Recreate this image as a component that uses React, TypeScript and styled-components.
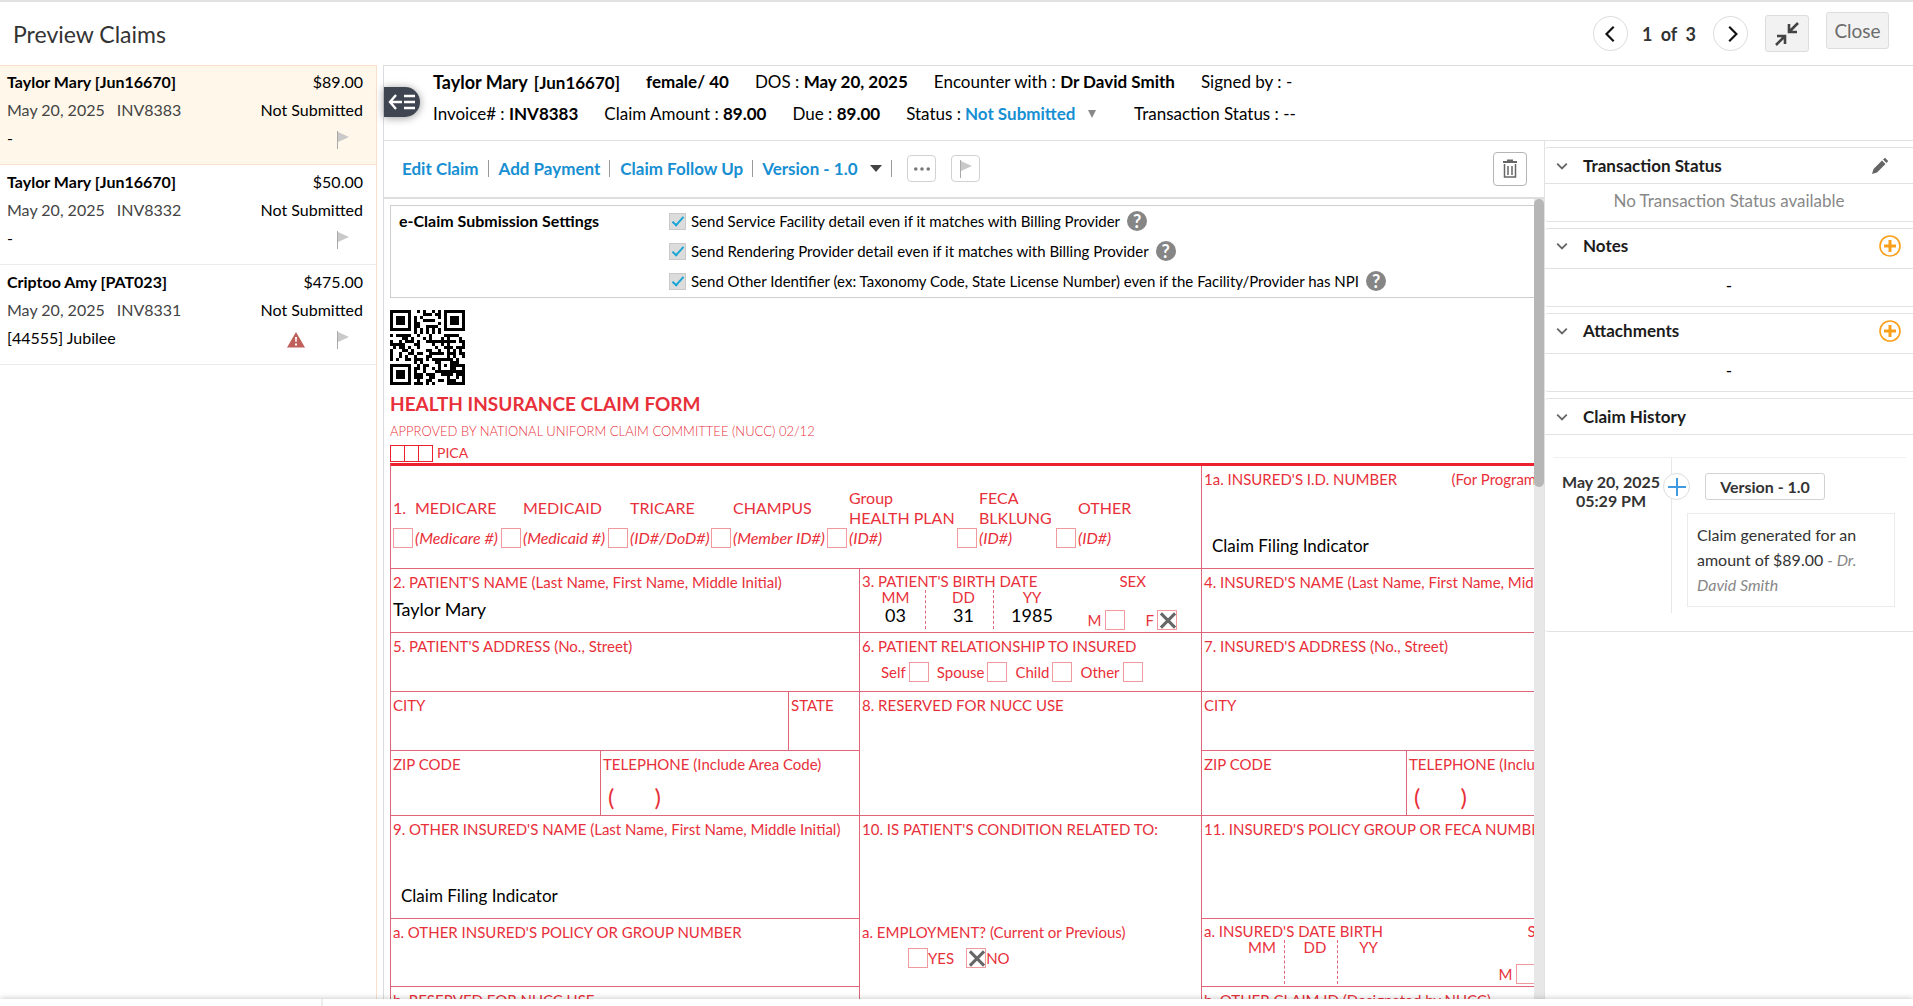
import React, { useMemo } from "react";
import styled, { createGlobalStyle, css } from "styled-components";

const RED = "#e8303a";
const RULE = "#df6678";
const BLUE = "#178fd2";
const LINE = "#e2e2e4";

const GlobalStyle = createGlobalStyle`
  *, *::before, *::after { box-sizing: border-box; }
  html, body { margin: 0; padding: 0; }
  body, button, input, select {
    font-family: Lato, "Open Sans", sans-serif;
    font-size: 16px;
    line-height: 20px;
    color: #000;
  }
  body { background: #fff; }
  button { cursor: pointer; padding: 0; margin: 0; }
  h1, h2, h3, p { margin: 0; }
`;

/* ---------- QR code ---------- */

const QR_SIZE = 25;
const QR_LEVELS = {
  L: { bits: 1, data: 34 },
  M: { bits: 0, data: 28 },
  Q: { bits: 3, data: 22 },
} as const;
type QrLevel = keyof typeof QR_LEVELS;

const MASKS: ((x: number, y: number) => boolean)[] = [
  (x, y) => (x + y) % 2 === 0,
  (_x, y) => y % 2 === 0,
  (x) => x % 3 === 0,
  (x, y) => (x + y) % 3 === 0,
  (x, y) => (Math.floor(x / 3) + Math.floor(y / 2)) % 2 === 0,
  (x, y) => ((x * y) % 2) + ((x * y) % 3) === 0,
  (x, y) => (((x * y) % 2) + ((x * y) % 3)) % 2 === 0,
  (x, y) => (((x + y) % 2) + ((x * y) % 3)) % 2 === 0,
];

function gfMul(a: number, b: number): number {
  let z = 0;
  for (let i = 7; i >= 0; i--) {
    z = (z << 1) ^ ((z >>> 7) * 0x11d);
    z ^= ((b >>> i) & 1) * a;
  }
  return z;
}

function parity(data: number[], degree: number): number[] {
  const div = new Array<number>(degree).fill(0);
  div[degree - 1] = 1;
  let root = 1;
  for (let i = 0; i < degree; i++) {
    for (let j = 0; j < degree; j++) {
      div[j] = gfMul(div[j], root);
      if (j + 1 < degree) div[j] ^= div[j + 1];
    }
    root = gfMul(root, 2);
  }
  const rem = new Array<number>(degree).fill(0);
  data.forEach((b) => {
    const f = b ^ (rem.shift() as number);
    rem.push(0);
    div.forEach((c, i) => (rem[i] ^= gfMul(c, f)));
  });
  return rem;
}

function qrMatrix(text: string, level: QrLevel, mask: number): boolean[][] {
  const { bits: levelBits, data: capacity } = QR_LEVELS[level];
  const grid = Array.from({ length: QR_SIZE }, () => new Array<boolean>(QR_SIZE).fill(false));
  const fixed = Array.from({ length: QR_SIZE }, () => new Array<boolean>(QR_SIZE).fill(false));
  const put = (x: number, y: number, dark: boolean) => {
    if (x < 0 || y < 0 || x >= QR_SIZE || y >= QR_SIZE) return;
    grid[y][x] = dark;
    fixed[y][x] = true;
  };

  for (let i = 0; i < QR_SIZE; i++) {
    put(6, i, i % 2 === 0);
    put(i, 6, i % 2 === 0);
  }
  [[3, 3], [QR_SIZE - 4, 3], [3, QR_SIZE - 4]].forEach(([cx, cy]) => {
    for (let dy = -4; dy <= 4; dy++)
      for (let dx = -4; dx <= 4; dx++) {
        const d = Math.max(Math.abs(dx), Math.abs(dy));
        put(cx + dx, cy + dy, d !== 2 && d !== 4);
      }
  });
  for (let dy = -2; dy <= 2; dy++)
    for (let dx = -2; dx <= 2; dx++)
      put(18 + dx, 18 + dy, Math.max(Math.abs(dx), Math.abs(dy)) !== 1);

  const format = (levelBits << 3) | mask;
  let bch = format;
  for (let i = 0; i < 10; i++) bch = (bch << 1) ^ ((bch >>> 9) * 0x537);
  const info = ((format << 10) | bch) ^ 0x5412;
  const bit = (i: number) => ((info >>> i) & 1) !== 0;
  for (let i = 0; i <= 5; i++) put(8, i, bit(i));
  put(8, 7, bit(6));
  put(8, 8, bit(7));
  put(7, 8, bit(8));
  for (let i = 9; i < 15; i++) put(14 - i, 8, bit(i));
  for (let i = 0; i < 8; i++) put(QR_SIZE - 1 - i, 8, bit(i));
  for (let i = 8; i < 15; i++) put(8, QR_SIZE - 15 + i, bit(i));
  put(8, QR_SIZE - 8, true);

  let stream = "0100" + text.length.toString(2).padStart(8, "0");
  for (const ch of text) stream += ch.charCodeAt(0).toString(2).padStart(8, "0");
  stream += "0000";
  const data: number[] = [];
  for (let i = 0; i + 8 <= stream.length; i += 8) data.push(parseInt(stream.slice(i, i + 8), 2));
  for (let pad = 0xec; data.length < capacity; pad ^= 0xec ^ 0x11) data.push(pad);
  const words = data.concat(parity(data, 44 - capacity));

  let n = 0;
  for (let right = QR_SIZE - 1; right >= 1; right -= 2) {
    if (right === 6) right = 5;
    for (let v = 0; v < QR_SIZE; v++)
      for (let j = 0; j < 2; j++) {
        const x = right - j;
        const y = ((right + 1) & 2) === 0 ? QR_SIZE - 1 - v : v;
        if (fixed[y][x]) continue;
        const dark = n < words.length * 8 && ((words[n >>> 3] >>> (7 - (n & 7))) & 1) === 1;
        grid[y][x] = dark !== MASKS[mask](x, y);
        n++;
      }
  }
  return grid;
}

const QrSvg = styled.svg`
  display: block;
  width: 75px;
  height: 75px;
`;

function QrCode({ text, level, mask }: { text: string; level: QrLevel; mask: number }) {
  const d = useMemo(
    () =>
      qrMatrix(text, level, mask)
        .flatMap((row, y) => row.map((on, x) => (on ? `M${x} ${y}h1v1h-1z` : "")))
        .join(""),
    [text, level, mask]
  );
  return (
    <QrSvg viewBox="0 0 25 25" shapeRendering="crispEdges" role="img" aria-label="QR code">
      <path d={d} />
    </QrSvg>
  );
}

/* ---------- icons ---------- */

const FlagIcon = () => (
  <svg width="14" height="18" viewBox="0 0 14 18" aria-hidden="true">
    <path d="M1.5 0v18" stroke="#a9a9a9" />
    <path d="M2 1l11 5-11 5z" fill="#c9c9c9" />
  </svg>
);
const WarningIcon = () => (
  <svg width="18" height="16" viewBox="0 0 18 16" aria-label="Warning" role="img">
    <path d="M9 0l9 15.500H0z" fill="#c0605a" />
    <path d="M8 5h2l-.4 5H8.400zM8 11.500h2v2H8z" fill="#fff" />
  </svg>
);
const Chevron = ({ d, size, w, color }: { d: string; size: number; w: number; color: string }) => (
  <svg width={size} height={size} viewBox="0 0 20 20" fill="none" stroke={color} strokeWidth={w} aria-hidden="true">
    <path d={d} />
  </svg>
);
const CompressIcon = () => (
  <svg width="26" height="26" viewBox="0 0 26 26" fill="none" stroke="#444" strokeWidth="2.600" aria-hidden="true">
    <path d="M24 2l-8.500 8.500M15 3v8h8M2 24l8.500-8.500M3 15h8v8" />
  </svg>
);
const TrashIcon = () => (
  <svg width="16" height="20" viewBox="0 0 16 20" fill="none" stroke="#666" aria-hidden="true">
    <path d="M1 3h14M5 1.500h6" strokeWidth="2" />
    <path d="M2.500 5v13h11V5M6 7v9M10 7v9" strokeWidth="1.500" />
  </svg>
);
const PencilIcon = () => (
  <svg width="18" height="18" viewBox="0 0 18 18" fill="#666" aria-hidden="true">
    <path d="M1 17l1.500-5 8.500-8.500 3.500 3.500L6 15.500zM12 2.500L14 .8l3.200 3.200-1.700 2z" />
  </svg>
);
const PlusCircle = () => (
  <svg width="22" height="22" viewBox="0 0 22 22" fill="none" stroke="#f9a01b" aria-hidden="true">
    <circle cx="11" cy="11" r="10" strokeWidth="1.600" />
    <path d="M11 5v12M5 11h12" strokeWidth="3" />
  </svg>
);
const CollapseIcon = () => (
  <svg width="28" height="18" viewBox="0 0 28 18" fill="none" stroke="#fff" strokeWidth="2.400" aria-hidden="true">
    <path d="M8 2L2 9l6 7M2 9h12M16 3h11M16 9h11M16 15h11" />
  </svg>
);
const Caret = ({ color, w }: { color: string; w: number }) => (
  <svg width={w} height={w === 12 ? 7 : 8} viewBox="0 0 12 8" preserveAspectRatio="none" aria-hidden="true">
    <path d="M0 0h12L6 8z" fill={color} />
  </svg>
);

/* ---------- page frame ---------- */

const Page = styled.div`
  height: 100vh;
  min-width: 1300px;
  display: flex;
  flex-direction: column;
  overflow: hidden;
  border-top: 2px solid #e2e2e2;
`;
const Header = styled.header`
  flex: none;
  height: 63px;
  display: flex;
  align-items: center;
  justify-content: space-between;
  padding: 0 24px 0 13px;
`;
const Title = styled.h1`
  font-size: 23px;
  line-height: 26px;
  font-weight: 400;
  color: #333;
`;
const HeaderTools = styled.div`
  display: flex;
  align-items: center;
  gap: 17px;
`;
const RoundButton = styled.button`
  width: 35px;
  height: 35px;
  display: grid;
  place-items: center;
  border: 1px solid #dcdcdc;
  border-radius: 50%;
  background: #fff;
`;
const PageCount = styled.span`
  width: 54px;
  margin-left: -3px;
  font-size: 18px;
  font-weight: 700;
  color: #333;
  display: flex;
  justify-content: space-between;
`;
const GreyButton = styled.button<{ $wide?: boolean; $raised?: boolean }>`
  width: ${(p) => (p.$wide ? 63 : 44)}px;
  height: 37px;
  display: grid;
  place-items: center;
  border: 1px solid #ddd;
  border-radius: 3px;
  background: #f2f2f2;
  color: #6b6b6b;
  font-size: 19px;
  margin-bottom: ${(p) => (p.$raised ? 6 : 0)}px;
`;
const Body = styled.div`
  flex: 1;
  min-height: 0;
  display: flex;
`;
const Footer = styled.footer`
  flex: none;
  height: 7px;
  position: relative;
  background: #fff;
  box-shadow: 0 0 6px rgba(0, 0, 0, 0.25);
  display: flex;
  &::before {
    content: "";
    width: 323px;
    border-right: 2px solid #ececec;
  }
`;

/* ---------- claim list ---------- */

const Sidebar = styled.nav`
  flex: none;
  width: 377px;
  border-right: 1px solid #fde0cb;
`;
const ClaimItem = styled.a<{ $active?: boolean }>`
  height: 100px;
  display: flex;
  flex-direction: column;
  gap: 8px;
  padding: ${(p) => (p.$active ? 6 : 7)}px 13px 0 7px;
  color: #000;
  text-decoration: none;
  border-bottom: 1px solid #ebebeb;
  ${(p) =>
    p.$active &&
    css`
      background: #fff7ea;
      border-top: 1px solid #fde0cb;
      border-bottom-color: #fde0cb;
    `}
`;
const ItemRow = styled.div`
  display: flex;
  justify-content: space-between;
  align-items: center;
  height: 20px;
`;
const Muted = styled.span`
  display: flex;
  gap: 12px;
  color: #444;
`;
const ItemIcons = styled.span`
  display: flex;
  align-items: center;
  gap: 31px;
  margin-right: 13px;
  padding-top: 4px;
`;

const claims = [
  { name: "Taylor Mary [Jun16670]", amount: "$89.00", inv: "INV8383", payer: "-", warn: false },
  { name: "Taylor Mary [Jun16670]", amount: "$50.00", inv: "INV8332", payer: "-", warn: false },
  { name: "Criptoo Amy [PAT023]", amount: "$475.00", inv: "INV8331", payer: "[44555] Jubilee", warn: true },
];

/* ---------- claim header ---------- */

const Main = styled.main`
  flex: 1;
  min-width: 0;
  margin-left: 6px;
  border-left: 1px solid #dcdce0;
  border-top: 1px solid #dcdce0;
  display: flex;
  flex-direction: column;
`;
const ClaimHead = styled.section`
  flex: none;
  position: relative;
  height: 75px;
  padding: 6px 20px 0 49px;
  border-bottom: 1px solid ${LINE};
  display: flex;
  flex-direction: column;
  gap: 12px;
  font-size: 17px;
`;
const HeadRow = styled.div`
  display: flex;
  align-items: center;
  gap: 26px;
  height: 20px;
  white-space: nowrap;
`;
const PatientName = styled.h2`
  font-size: 18px;
  font-weight: 700;
  span { font-size: 17px; margin-left: 6px; }
`;
const StatusField = styled.label`
  display: flex;
  align-items: center;
  gap: 4px;
`;
const PlainSelect = styled.select<{ $gap: number }>`
  appearance: none;
  border: 0;
  padding: 0;
  background: transparent;
  color: ${BLUE};
  font-size: 17px;
  font-weight: 700;
  margin-right: ${(p) => p.$gap}px;
`;
const HeadNote = styled.span`
  margin-left: 12px;
`;
const Toggle = styled.button`
  position: absolute;
  left: 0;
  top: 21px;
  width: 36px;
  height: 30px;
  display: grid;
  place-items: center;
  border: 0;
  border-radius: 0 15px 15px 0;
  background: #3f4651;
  box-shadow: 0 1px 8px rgba(0, 0, 0, 0.4);
`;
const Columns = styled.div`
  flex: 1;
  min-height: 0;
  display: flex;
`;
const Work = styled.div`
  flex: 1;
  min-width: 0;
  display: flex;
  flex-direction: column;
`;
const Toolbar = styled.div`
  flex: none;
  height: 58px;
  display: flex;
  align-items: center;
  justify-content: space-between;
  padding: 0 17px 1px 18px;
  border-bottom: 2px solid #dedede;
  font-size: 17px;
`;
const ToolGroup = styled.div`
  display: flex;
  align-items: center;
`;
const ToolLink = styled.a`
  color: ${BLUE};
  font-weight: 700;
  text-decoration: none;
  padding: 0 9px 0 10px;
  border-right: 1px solid #999;
  line-height: 17px;
  &:first-child { padding-left: 0; }
`;
const VersionField = styled.label`
  display: flex;
  align-items: center;
  padding: 0 9px;
  border-right: 1px solid #999;
  height: 17px;
`;
const BoxButton = styled.button<{ $strong?: boolean }>`
  width: ${(p) => (p.$strong ? 34 : 29)}px;
  height: ${(p) => (p.$strong ? 34 : 27)}px;
  margin-left: 15px;
  display: grid;
  place-items: center;
  border: 1px solid ${(p) => (p.$strong ? "#b5b5b5" : "#d2d2d2")};
  border-radius: 4px;
  background: #fff;
`;

/* ---------- scroll area ---------- */

const ScrollWrap = styled.div`
  flex: 1;
  min-height: 0;
  display: flex;
`;
const Scroll = styled.div`
  flex: 1;
  min-width: 0;
  overflow: hidden;
  padding: 6px 0 0 6px;
`;
const Track = styled.div`
  flex: none;
  width: 10px;
  background: #e7e7e7;
`;
const Thumb = styled.div`
  height: 36%;
  border-radius: 5px;
  background: #b6b6b6;
`;
const Sheet = styled.div`
  width: 1260px;
`;
const Settings = styled.section`
  height: 93px;
  border: 1px solid #cfcfcf;
  display: grid;
  grid-template-columns: 278px 1fr;
  padding-top: 5px;
`;
const SettingsTitle = styled.h3`
  font-size: 16px;
  font-weight: 700;
  padding-left: 8px;
`;
const SettingsList = styled.div`
  display: flex;
  flex-direction: column;
  gap: 10px;
`;
const SettingRow = styled.div`
  display: flex;
  align-items: center;
  height: 20px;
  font-size: 15px;
  label { margin: 0 7px 0 5px; }
`;
const Tick = styled.input`
  appearance: none;
  flex: none;
  width: 17px;
  height: 17px;
  margin: 0;
  border: 1px solid #c9c9c9;
  background: #dcdcdc;
  display: grid;
  place-items: center;
  &:checked::before {
    content: "";
    width: 6px;
    height: 12px;
    margin-bottom: 4px;
    border: solid #19a5d6;
    border-width: 0 2px 2px 0;
    transform: rotate(42deg);
  }
`;
const Help = styled.button`
  width: 20px;
  height: 20px;
  border: 0;
  border-radius: 50%;
  background: #868686;
  color: #fff;
  font-size: 18px;
  font-weight: 700;
`;

/* ---------- claim form ---------- */

const FormHead = styled.div`
  padding-top: 12px;
  color: ${RED};
`;
const FormTitle = styled.h2`
  font-size: 19px;
  line-height: 24px;
  font-weight: 700;
  margin-top: 7px;
`;
const Approved = styled.p`
  font-weight: 300;
  font-size: 13px;
  margin-top: 5px;
`;
const Pica = styled.div`
  display: flex;
  align-items: center;
  height: 22px;
  padding-top: 2px;
  font-size: 14px;
  i {
    width: 15px;
    height: 17px;
    border: 1px solid #eb212e;
    & + i { margin-left: -1px; }
    &:nth-child(3) { margin-right: 4px; }
  }
`;
const Form = styled.div`
  border-top: 3px solid #eb212e;
  border-left: 1px solid ${RULE};
  color: ${RED};
  font-size: 15px;
  display: grid;
  grid-template-columns: 468px 342px 1fr;
  grid-template-rows: 103px 64px 59px 59px 65px 103px 68px 60px;
  white-space: nowrap;
`;
const Cell = styled.div<{ $rows?: number; $cols?: number; $left?: boolean; $open?: boolean }>`
  grid-row: span ${(p) => p.$rows ?? 1};
  grid-column: span ${(p) => p.$cols ?? 1};
  border-bottom: ${(p) => (p.$open ? "0" : `1px solid ${RULE}`)};
  border-left: ${(p) => (p.$left ? `1px solid ${RULE}` : "0")};
  padding: 3px 0 0 2px;
  min-width: 0;
`;
const Split = styled.div<{ $first: number; $left?: boolean }>`
  display: grid;
  grid-template-columns: ${(p) => p.$first}px 1fr;
  border-left: ${(p) => (p.$left ? `1px solid ${RULE}` : "0")};
`;
const Value = styled.div<{ $indent?: boolean; $gap: number }>`
  color: #000;
  font-size: ${(p) => (p.$indent ? 17 : 18)}px;
  margin-top: ${(p) => p.$gap}px;
  padding-left: ${(p) => (p.$indent ? 8 : 0)}px;
`;
const Parens = styled.div`
  display: flex;
  gap: 40px;
  padding: 11px 0 0 5px;
  font-size: 24px;
  line-height: 24px;
`;
const Spread = styled.div<{ $right: number; $tight?: boolean }>`
  display: flex;
  justify-content: space-between;
  padding-right: ${(p) => p.$right}px;
  line-height: ${(p) => (p.$tight ? 18 : 20)}px;
`;
const Plans = styled.div`
  display: grid;
  grid-template-columns: 108px 107px 103px 116px 130px 99px 1fr;
  padding-top: 19px;
  font-size: 16px;
`;
const Plan = styled.div`
  display: grid;
  grid-template-columns: 20px 1fr;
  column-gap: 2px;
  align-items: center;
`;
const PlanName = styled.span`
  height: 40px;
  display: flex;
  align-items: center;
  white-space: pre-line;
`;
const Cross = styled.input`
  appearance: none;
  flex: none;
  width: 20px;
  height: 20px;
  margin: 0;
  border: 1px solid #f0999f;
  background: #fff;
  display: grid;
  place-items: center;
  &:checked::before,
  &:checked::after {
    content: "";
    grid-area: 1 / 1;
    width: 20px;
    height: 3px;
    background: #666;
    transform: rotate(45deg);
  }
  &:checked::after { transform: rotate(-45deg); }
`;
const DateSex = styled.div`
  display: flex;
  justify-content: space-between;
`;
const DateParts = styled.div<{ $cell: number; $start: number; $tall?: boolean }>`
  display: flex;
  padding-left: ${(p) => p.$start}px;
  line-height: 14px;
  text-align: center;
  div {
    width: ${(p) => p.$cell}px;
    height: ${(p) => (p.$tall ? 44 : 39)}px;
    padding-left: 8px;
    border-right: 1px dashed ${RULE};
  }
  div:first-child {
    width: ${(p) => p.$cell - 4}px;
    padding-left: 4px;
  }
  div:last-child { border-right: 0; }
  b {
    display: block;
    font-weight: 400;
    font-size: 18px;
    line-height: 22px;
    color: #000;
  }
`;
const Choices = styled.div<{ $gap: number; $start?: number; $end?: number; $top: number; $inner: number }>`
  display: flex;
  gap: ${(p) => p.$gap}px;
  padding: ${(p) => p.$top}px ${(p) => p.$end ?? 0}px 0 ${(p) => p.$start ?? 0}px;
  label {
    display: flex;
    align-items: center;
    gap: ${(p) => p.$inner}px;
  }
`;

const plans = [
  ["MEDICARE", "(Medicare #)"],
  ["MEDICAID", "(Medicaid #)"],
  ["TRICARE", "(ID#/DoD#)"],
  ["CHAMPUS", "(Member ID#)"],
  ["Group\nHEALTH PLAN", "(ID#)"],
  ["FECA\nBLKLUNG", "(ID#)"],
  ["OTHER", "(ID#)"],
];

/* ---------- right column ---------- */

const Aside = styled.aside`
  flex: none;
  width: 369px;
  border-left: 1px solid ${LINE};
  padding-top: 6px;
  display: flex;
  flex-direction: column;
  gap: 6px;
`;
const Panel = styled.section`
  border: 1px solid ${LINE};
  border-width: 1px 0;
  border-radius: 3px 0 0 3px;
`;
const PanelHead = styled.div<{ $short?: boolean }>`
  height: ${(p) => (p.$short ? 36 : 40)}px;
  display: flex;
  align-items: center;
  padding: 0 12px ${(p) => (p.$short ? 0 : 5)}px 11px;
  border-bottom: 1px solid ${LINE};
  h3 { flex: 1; font-size: 17px; font-weight: 700; color: #1c1c1c; }
`;
const IconButton = styled.button<{ $end?: number }>`
  display: grid;
  place-items: center;
  border: 0;
  background: none;
  margin-right: ${(p) => p.$end ?? 0}px;
`;
const FoldButton = styled(IconButton)`
  margin-right: 15px;
`;
const PanelBody = styled.div<{ $grey?: boolean }>`
  height: 37px;
  padding-bottom: 4px;
  display: grid;
  place-items: center;
  font-size: 17px;
  color: ${(p) => (p.$grey ? "#888" : "#000")};
`;
const History = styled.div`
  margin: 22px 7px 18px 8px;
  border-top: 1px solid #f0f0f0;
  display: grid;
  grid-template-columns: 119px 1fr;
`;
const When = styled.div`
  padding: 14px 2px 0 0;
  text-align: center;
  line-height: 19px;
  font-weight: 700;
  color: #333;
  border-right: 1px solid #e8e8ea;
`;
const Event = styled.div`
  position: relative;
  padding: 15px 11px 6px 15px;
`;
const Dot = styled.button`
  position: absolute;
  left: -9px;
  top: 15px;
  width: 27px;
  height: 27px;
  display: grid;
  place-items: center;
  border: 1px solid #dcdcdc;
  border-radius: 50%;
  background: #fff;
`;
const VersionButton = styled.button`
  display: block;
  width: 120px;
  height: 27px;
  margin-left: 18px;
  border: 1px solid #d2d2d6;
  border-radius: 3px;
  background: #fff;
  font-weight: 700;
  color: #333;
`;
const Note = styled.p`
  margin-top: 13px;
  padding: 8px 9px 9px;
  border: 1px solid #ebebed;
  line-height: 25px;
  color: #333;
  em { color: #888; }
`;

const Fold = () => (
  <FoldButton aria-label="Collapse section">
    <Chevron d="M2 6l8 8 8-8" size={12} w={3} color="#666" />
  </FoldButton>
);

const settings = [
  "Send Service Facility detail even if it matches with Billing Provider",
  "Send Rendering Provider detail even if it matches with Billing Provider",
  "Send Other Identifier (ex: Taxonomy Code, State License Number) even if the Facility/Provider has NPI",
];

function ClaimForm() {
  return (
    <Form>
      <Cell $cols={2}>
        <Plans>
          {plans.map(([name, hint], i) => (
            <Plan key={name}>
              <span>{i === 0 ? "1." : ""}</span>
              <PlanName>{name}</PlanName>
              <Cross type="checkbox" id={`plan${i}`} />
              <label htmlFor={`plan${i}`}>
                <em>{hint}</em>
              </label>
            </Plan>
          ))}
        </Plans>
      </Cell>
      <Cell $left>
        <Spread $right={48}>
          <span>1a. INSURED'S I.D. NUMBER</span>
          <span>(For Program in Item 1)</span>
        </Spread>
        <Value $indent $gap={47}>Claim Filing Indicator</Value>
      </Cell>

      <Cell>
        2. PATIENT'S NAME (Last Name, First Name, Middle Initial)
        <Value $gap={7}>Taylor Mary</Value>
      </Cell>
      <Cell $left>
        <Spread $right={55} $tight>
          <span>3. PATIENT'S BIRTH DATE</span>
          <span>SEX</span>
        </Spread>
        <DateSex>
          <DateParts $cell={68} $start={0}>
            <div>MM<b>03</b></div>
            <div>DD<b>31</b></div>
            <div>YY<b>1985</b></div>
          </DateParts>
          <Choices $gap={21} $end={24} $top={20} $inner={3}>
            <label>M<Cross type="checkbox" /></label>
            <label>F<Cross type="checkbox" defaultChecked /></label>
          </Choices>
        </DateSex>
      </Cell>
      <Cell $left>4. INSURED'S NAME (Last Name, First Name, Middle Initial)</Cell>

      <Cell>5. PATIENT'S ADDRESS (No., Street)</Cell>
      <Cell $left>
        6. PATIENT RELATIONSHIP TO INSURED
        <Choices $gap={8} $start={19} $top={6} $inner={3}>
          {["Self", "Spouse", "Child", "Other"].map((t) => (
            <label key={t}>{t}<Cross type="checkbox" /></label>
          ))}
        </Choices>
      </Cell>
      <Cell $left>7. INSURED'S ADDRESS (No., Street)</Cell>

      <Split $first={397}>
        <Cell>CITY</Cell>
        <Cell $left>STATE</Cell>
      </Split>
      <Cell $left $rows={2}>8. RESERVED FOR NUCC USE</Cell>
      <Split $first={380} $left>
        <Cell>CITY</Cell>
        <Cell $left>STATE</Cell>
      </Split>

      <Split $first={209}>
        <Cell>ZIP CODE</Cell>
        <Cell $left>
          TELEPHONE (Include Area Code)
          <Parens><span>(</span><span>)</span></Parens>
        </Cell>
      </Split>
      <Split $first={204} $left>
        <Cell>ZIP CODE</Cell>
        <Cell $left>
          TELEPHONE (Include Area Code)
          <Parens><span>(</span><span>)</span></Parens>
        </Cell>
      </Split>

      <Cell>
        9. OTHER INSURED'S NAME (Last Name, First Name, Middle Initial)
        <Value $indent $gap={47}>Claim Filing Indicator</Value>
      </Cell>
      <Cell $left $open>10. IS PATIENT'S CONDITION RELATED TO:</Cell>
      <Cell $left>11. INSURED'S POLICY GROUP OR FECA NUMBER</Cell>

      <Cell>a. OTHER INSURED'S POLICY OR GROUP NUMBER</Cell>
      <Cell $left $open>
        a. EMPLOYMENT? (Current or Previous)
        <Choices $gap={12} $start={46} $top={6} $inner={0}>
          <label><Cross type="checkbox" />YES</label>
          <label><Cross type="checkbox" defaultChecked />NO</label>
        </Choices>
      </Cell>
      <Cell $left>
        <Spread $right={96} $tight>
          <span>a. INSURED'S DATE BIRTH</span>
          <span>SEX</span>
        </Spread>
        <DateSex>
          <DateParts $cell={53} $start={32} $tall>
            <div>MM</div>
            <div>DD</div>
            <div>YY</div>
          </DateParts>
          <Choices $gap={22} $end={61} $top={24} $inner={3}>
            <label>M<Cross type="checkbox" /></label>
            <label>F<Cross type="checkbox" /></label>
          </Choices>
        </DateSex>
      </Cell>

      <Cell $open>b. RESERVED FOR NUCC USE</Cell>
      <Cell $left $open />
      <Cell $left $open>b. OTHER CLAIM ID (Designated by NUCC)</Cell>
    </Form>
  );
}

export default function App() {
  return (
    <Page>
      <GlobalStyle />
      <Header>
        <Title>Preview Claims</Title>
        <HeaderTools>
          <RoundButton aria-label="Previous claim">
            <Chevron d="M13 2l-8 8 8 8" size={18} w={2.4} color="#111" />
          </RoundButton>
          <PageCount><span>1</span><span>of</span><span>3</span></PageCount>
          <RoundButton aria-label="Next claim">
            <Chevron d="M8 2l8 8-8 8" size={18} w={2.4} color="#111" />
          </RoundButton>
          <GreyButton aria-label="Exit full screen"><CompressIcon /></GreyButton>
          <GreyButton $wide $raised>Close</GreyButton>
        </HeaderTools>
      </Header>

      <Body>
        <Sidebar>
          {claims.map((c, i) => (
            <ClaimItem key={c.inv} href="#" $active={i === 0}>
              <ItemRow><b>{c.name}</b><span>{c.amount}</span></ItemRow>
              <ItemRow>
                <Muted><span>May 20, 2025</span><span>{c.inv}</span></Muted>
                <span>Not Submitted</span>
              </ItemRow>
              <ItemRow>
                <span>{c.payer}</span>
                <ItemIcons>{c.warn && <WarningIcon />}<FlagIcon /></ItemIcons>
              </ItemRow>
            </ClaimItem>
          ))}
        </Sidebar>

        <Main>
          <ClaimHead>
            <Toggle aria-label="Hide claim list"><CollapseIcon /></Toggle>
            <HeadRow>
              <PatientName>Taylor Mary<span>[Jun16670]</span></PatientName>
              <b>female/ 40</b>
              <span>DOS : <b>May 20, 2025</b></span>
              <span>Encounter with : <b>Dr David Smith</b></span>
              <span>Signed by : -</span>
            </HeadRow>
            <HeadRow>
              <span>Invoice# : <b>INV8383</b></span>
              <span>Claim Amount : <b>89.00</b></span>
              <span>Due : <b>89.00</b></span>
              <StatusField>
                Status :
                <PlainSelect $gap={8} defaultValue="Not Submitted"><option>Not Submitted</option></PlainSelect>
                <Caret color="#888" w={8} />
              </StatusField>
              <HeadNote>Transaction Status : --</HeadNote>
            </HeadRow>
          </ClaimHead>

          <Columns>
            <Work>
              <Toolbar>
                <ToolGroup>
                  <ToolLink href="#">Edit Claim</ToolLink>
                  <ToolLink href="#">Add Payment</ToolLink>
                  <ToolLink href="#">Claim Follow Up</ToolLink>
                  <VersionField>
                    <PlainSelect $gap={12} aria-label="Version" defaultValue="Version - 1.0"><option>Version - 1.0</option></PlainSelect>
                    <Caret color="#444" w={12} />
                  </VersionField>
                  <BoxButton aria-label="More actions">
                    <svg width="16" height="4" viewBox="0 0 18 4" fill="#777" aria-hidden="true"><circle cx="2" cy="2" r="2" /><circle cx="9" cy="2" r="2" /><circle cx="16" cy="2" r="2" /></svg>
                  </BoxButton>
                  <BoxButton aria-label="Flag claim"><FlagIcon /></BoxButton>
                </ToolGroup>
                <BoxButton $strong aria-label="Delete claim"><TrashIcon /></BoxButton>
              </Toolbar>
              <ScrollWrap>
                <Scroll>
                  <Sheet>
                    <Settings>
                      <SettingsTitle>e-Claim Submission Settings</SettingsTitle>
                      <SettingsList>
                        {settings.map((s, i) => (
                          <SettingRow key={s}>
                            <Tick type="checkbox" id={`set${i}`} defaultChecked />
                            <label htmlFor={`set${i}`}>{s}</label>
                            <Help aria-label="Help">?</Help>
                          </SettingRow>
                        ))}
                      </SettingsList>
                    </Settings>
                    <FormHead>
                      <QrCode text="http://www.nucc.org/" level="M" mask={2} />
                      <FormTitle>HEALTH INSURANCE CLAIM FORM</FormTitle>
                      <Approved>APPROVED BY NATIONAL UNIFORM CLAIM COMMITTEE (NUCC) 02/12</Approved>
                      <Pica><i /><i /><i />PICA</Pica>
                    </FormHead>
                    <ClaimForm />
                  </Sheet>
                </Scroll>
                <Track aria-hidden="true"><Thumb /></Track>
              </ScrollWrap>
            </Work>

            <Aside>
              <Panel>
                <PanelHead $short>
                  <Fold />
                  <h3>Transaction Status</h3>
                  <IconButton aria-label="Edit transaction status" $end={12}><PencilIcon /></IconButton>
                </PanelHead>
                <PanelBody $grey>No Transaction Status available</PanelBody>
              </Panel>
              {["Notes", "Attachments"].map((t) => (
                <Panel key={t}>
                  <PanelHead>
                    <Fold />
                    <h3>{t}</h3>
                    <IconButton aria-label={`Add ${t}`}><PlusCircle /></IconButton>
                  </PanelHead>
                  <PanelBody>-</PanelBody>
                </Panel>
              ))}
              <Panel>
                <PanelHead $short>
                  <Fold />
                  <h3>Claim History</h3>
                </PanelHead>
                <History>
                  <When>May 20, 2025<br />05:29 PM</When>
                  <Event>
                    <Dot aria-label="Expand">
                      <svg width="20" height="20" viewBox="0 0 20 20" stroke="#3f9ae0" strokeWidth="2" aria-hidden="true"><path d="M10 1v18M1 10h18" /></svg>
                    </Dot>
                    <VersionButton>Version - 1.0</VersionButton>
                    <Note>Claim generated for an amount of $89.00 <em>- Dr. David Smith</em></Note>
                  </Event>
                </History>
              </Panel>
            </Aside>
          </Columns>
        </Main>
      </Body>
      <Footer />
    </Page>
  );
}
